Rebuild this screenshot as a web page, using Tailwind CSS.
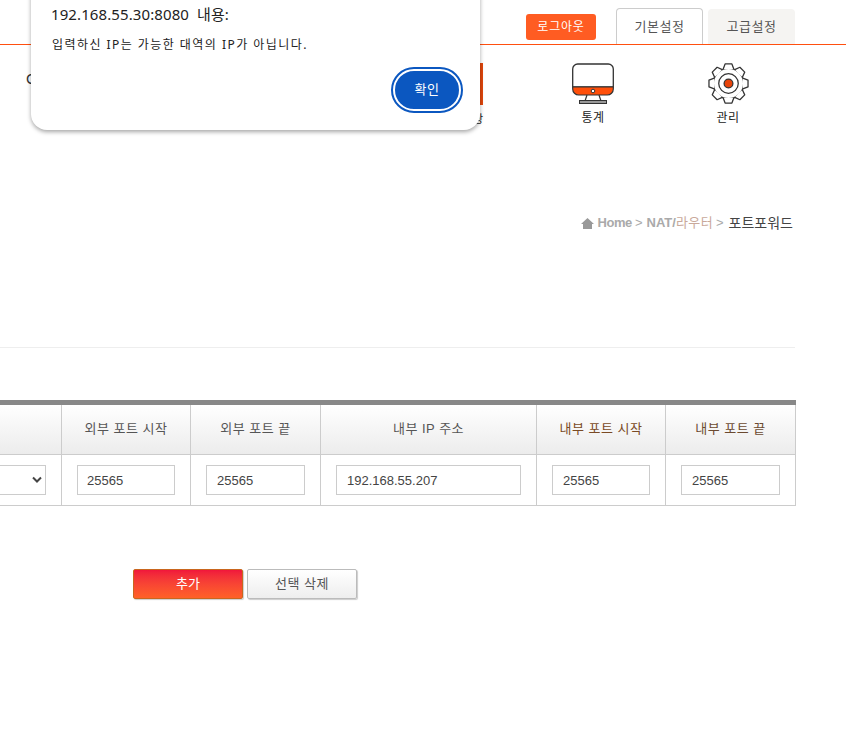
<!DOCTYPE html>
<html lang="ko">
<head>
    <meta charset="UTF-8">
    <title>포트포워드</title>
    <script src="https://cdn.jsdelivr.net/npm/@tailwindcss/browser@4"></script>
</head>
<body class="bg-white overflow-hidden font-['Liberation_Sans','Noto_Sans_CJK_KR',sans-serif] text-[13px] text-[#555]">
<div class="relative w-[846px] h-[754px] overflow-hidden">

    <!-- top bar -->
    <header class="h-[45px] border-b border-[#ff4f0f] flex items-end pl-[526px]">
        <a class="w-[70px] h-[26px] mb-[4px] bg-[#ff5c22] rounded-[3px] text-white text-[12px] tracking-[0.8px] flex items-center justify-center">로그아웃</a>
        <div class="w-[87px] h-[36px] ml-[20px] bg-white border border-b-0 border-[#ccc] rounded-t-[4px] tracking-[0.5px] flex items-center justify-center">기본설정</div>
        <div class="w-[87px] h-[35px] ml-[5px] bg-[#f5f4f2] rounded-t-[4px] tracking-[0.5px] flex items-center justify-center">고급설정</div>
    </header>

    <!-- main menu -->
    <nav class="h-[90px] flex pl-[440px] pt-[18px] text-[#222] text-[12px] tracking-[0.5px]">
        <div class="w-[43px] h-[42px] border-r-[3px] border-[#e2470c] bg-[#333] relative">
            <span class="absolute left-[33px] top-[48px] w-[20px] text-[11px]">항</span>
        </div>
        <div class="w-[58px] ml-[81px] flex flex-col items-center">
            <svg width="42" height="41" viewBox="0 0 42 41" fill="none">
                <path d="M.7 24V6a5 5 0 0 1 5-5h30.600a5 5 0 0 1 5 5v18z" fill="#fff" stroke="#333" stroke-width="1.300"/>
                <path d="M.7 24h40.600v2a6 6 0 0 1-6 6H6.700a6 6 0 0 1-6-6z" fill="#ff4f0a" stroke="#333" stroke-width="1.200"/>
                <circle cx="21" cy="28" r="1.800" fill="#fff" stroke="#333"/>
                <path d="M15 32l-2 6M27 32l2 6" stroke="#333" stroke-width="1.200"/>
                <rect x="7.500" y="37.500" width="27" height="3" fill="#999" stroke="#333"/>
            </svg>
            <span class="mt-[6px] leading-[16px]">통계</span>
        </div>
        <div class="w-[58px] ml-[77px] flex flex-col items-center">
            <svg width="41" height="41" viewBox="-21 -21 42 42" fill="#fff" stroke="#333" stroke-width="1.300">
                <circle r="15.500"/>
                <path d="M-5.500-14.600L-3.500-20H3.500L5.500-14.600" stroke-linejoin="round"/>
                <path d="M-5.500-14.600L-3.500-20H3.500L5.500-14.600" stroke-linejoin="round" transform="rotate(45)"/>
                <path d="M-5.500-14.600L-3.500-20H3.500L5.500-14.600" stroke-linejoin="round" transform="rotate(90)"/>
                <path d="M-5.500-14.600L-3.500-20H3.500L5.500-14.600" stroke-linejoin="round" transform="rotate(135)"/>
                <path d="M-5.500-14.600L-3.500-20H3.500L5.500-14.600" stroke-linejoin="round" transform="rotate(180)"/>
                <path d="M-5.500-14.600L-3.500-20H3.500L5.500-14.600" stroke-linejoin="round" transform="rotate(225)"/>
                <path d="M-5.500-14.600L-3.500-20H3.500L5.500-14.600" stroke-linejoin="round" transform="rotate(270)"/>
                <path d="M-5.500-14.600L-3.500-20H3.500L5.500-14.600" stroke-linejoin="round" transform="rotate(315)"/>
                <circle r="10"/>
                <circle r="4.500" fill="#e8440a"/>
            </svg>
            <span class="mt-[6px] leading-[16px]">관리</span>
        </div>
    </nav>

    <!-- breadcrumb -->
    <div class="h-[36px] mt-[70px] flex items-center justify-end pr-[53px] text-[#aaa] text-[13px] gap-[3px]">
        <svg width="13" height="11" viewBox="0 0 13 11" fill="#999" class="mr-[0px]"><path d="M6.500 0L13 6h-2v5H2V6H0z"/></svg>
        <span class="font-bold tracking-[-0.4px]">Home</span><span>&gt;</span>
        <span class="ml-[1px] font-bold">NAT/<span class="font-normal text-[13px] text-[#c9a99b] tracking-[0.4px]">라우터</span></span><span>&gt;</span>
        <span class="ml-[2px] text-[14px] text-[#444]">포트포워드</span>
    </div>

    <div class="w-[795px] h-px mt-[106px] bg-[#eee]"></div>

    <!-- port forward table -->
    <section class="w-[796px] mt-[52px] border-t-[5px] border-[#888]">
        <div class="flex h-[50px] pb-0 border-b border-[#ccc] bg-gradient-to-b from-white to-[#ececec] tracking-[0.5px]">
            <div class="w-[62px] border-r border-[#ccc]"></div>
            <div class="w-[129px] pb-[2px] border-r border-[#ccc] flex items-center justify-center">외부 포트 시작</div>
            <div class="w-[130px] pb-[2px] border-r border-[#ccc] flex items-center justify-center">외부 포트 끝</div>
            <div class="w-[216px] pb-[2px] border-r border-[#ccc] flex items-center justify-center">내부 IP 주소</div>
            <div class="w-[129px] pb-[2px] border-r border-[#ccc] flex items-center justify-center text-[#7a4a24]">내부 포트 시작</div>
            <div class="w-[130px] pb-[2px] border-r border-[#ccc] flex items-center justify-center text-[#6b4a30]">내부 포트 끝</div>
        </div>
        <div class="flex h-[51px] border-b border-[#ccc]">
            <div class="w-[62px] border-r border-[#ccc] flex items-center">
                <div class="w-[46px] h-[30px] border border-l-0 border-[#ccc] flex items-center justify-end pr-[2px]">
                    <svg width="12" height="8" viewBox="0 0 12 8" fill="none" stroke="#444" stroke-width="2"><path d="M2 1.500l4 4 4-4"/></svg>
                </div>
            </div>
            <div class="w-[129px] border-r border-[#ccc] flex items-center pl-[15px]">
                <input class="w-[98px] h-[30px] border border-[#ccc] pl-[9px] text-[#444]" value="25565">
            </div>
            <div class="w-[130px] border-r border-[#ccc] flex items-center pl-[15px]">
                <input class="w-[99px] h-[30px] border border-[#ccc] pl-[10px] text-[#444]" value="25565">
            </div>
            <div class="w-[216px] border-r border-[#ccc] flex items-center pl-[15px]">
                <input class="w-[185px] h-[30px] border border-[#ccc] pl-[10px] text-[#444]" value="192.168.55.207">
            </div>
            <div class="w-[129px] border-r border-[#ccc] flex items-center pl-[15px]">
                <input class="w-[98px] h-[30px] border border-[#ccc] pl-[10px] text-[#444]" value="25565">
            </div>
            <div class="w-[130px] border-r border-[#ccc] flex items-center pl-[15px]">
                <input class="w-[99px] h-[30px] border border-[#ccc] pl-[10px] text-[#444]" value="25565">
            </div>
        </div>
    </section>

    <!-- buttons -->
    <div class="flex gap-[4px] pl-[133px] mt-[63px]">
        <button class="w-[110px] h-[30px] border border-[#c9661e] rounded-[2px] bg-gradient-to-b from-[#f0163c] to-[#ff6126] text-white shadow-[1px_1px_1px_#ccc]">추가</button>
        <button class="w-[110px] h-[30px] border border-[#bbb] rounded-[2px] bg-gradient-to-b from-white to-[#eee] tracking-[0.5px] shadow-[1px_1px_1px_#ccc]">선택 삭제</button>
    </div>

    <span class="absolute left-[26px] top-[68px] text-[15px] text-[#333]">C</span>

    <!-- alert dialog -->
    <div class="absolute left-[31px] top-[-20px] w-[449px] h-[150px] bg-white rounded-b-[16px] shadow-[0_2px_4px_rgba(0,0,0,0.35)] font-['Noto_Sans','Noto_Sans_CJK_KR',sans-serif] text-[#222]">
        <p class="absolute left-[20px] top-[23px] text-[15px] leading-[22px] [word-spacing:4px] tracking-[0.1px]">192.168.55.30:8080 내용:</p>
        <p class="absolute left-[21px] top-[55px] text-[12px] leading-[20px] tracking-[1.45px]">입력하신 IP는 가능한 대역의 IP가 아닙니다.</p>
        <button class="absolute left-[362px] top-[89px] w-[68px] h-[42px] rounded-full bg-[#0b57c0] border-[2px] border-white outline-2 outline-[#0b57c0] text-white text-[13px] tracking-[0.5px]">확인</button>
    </div>
</div>
</body>
</html>
